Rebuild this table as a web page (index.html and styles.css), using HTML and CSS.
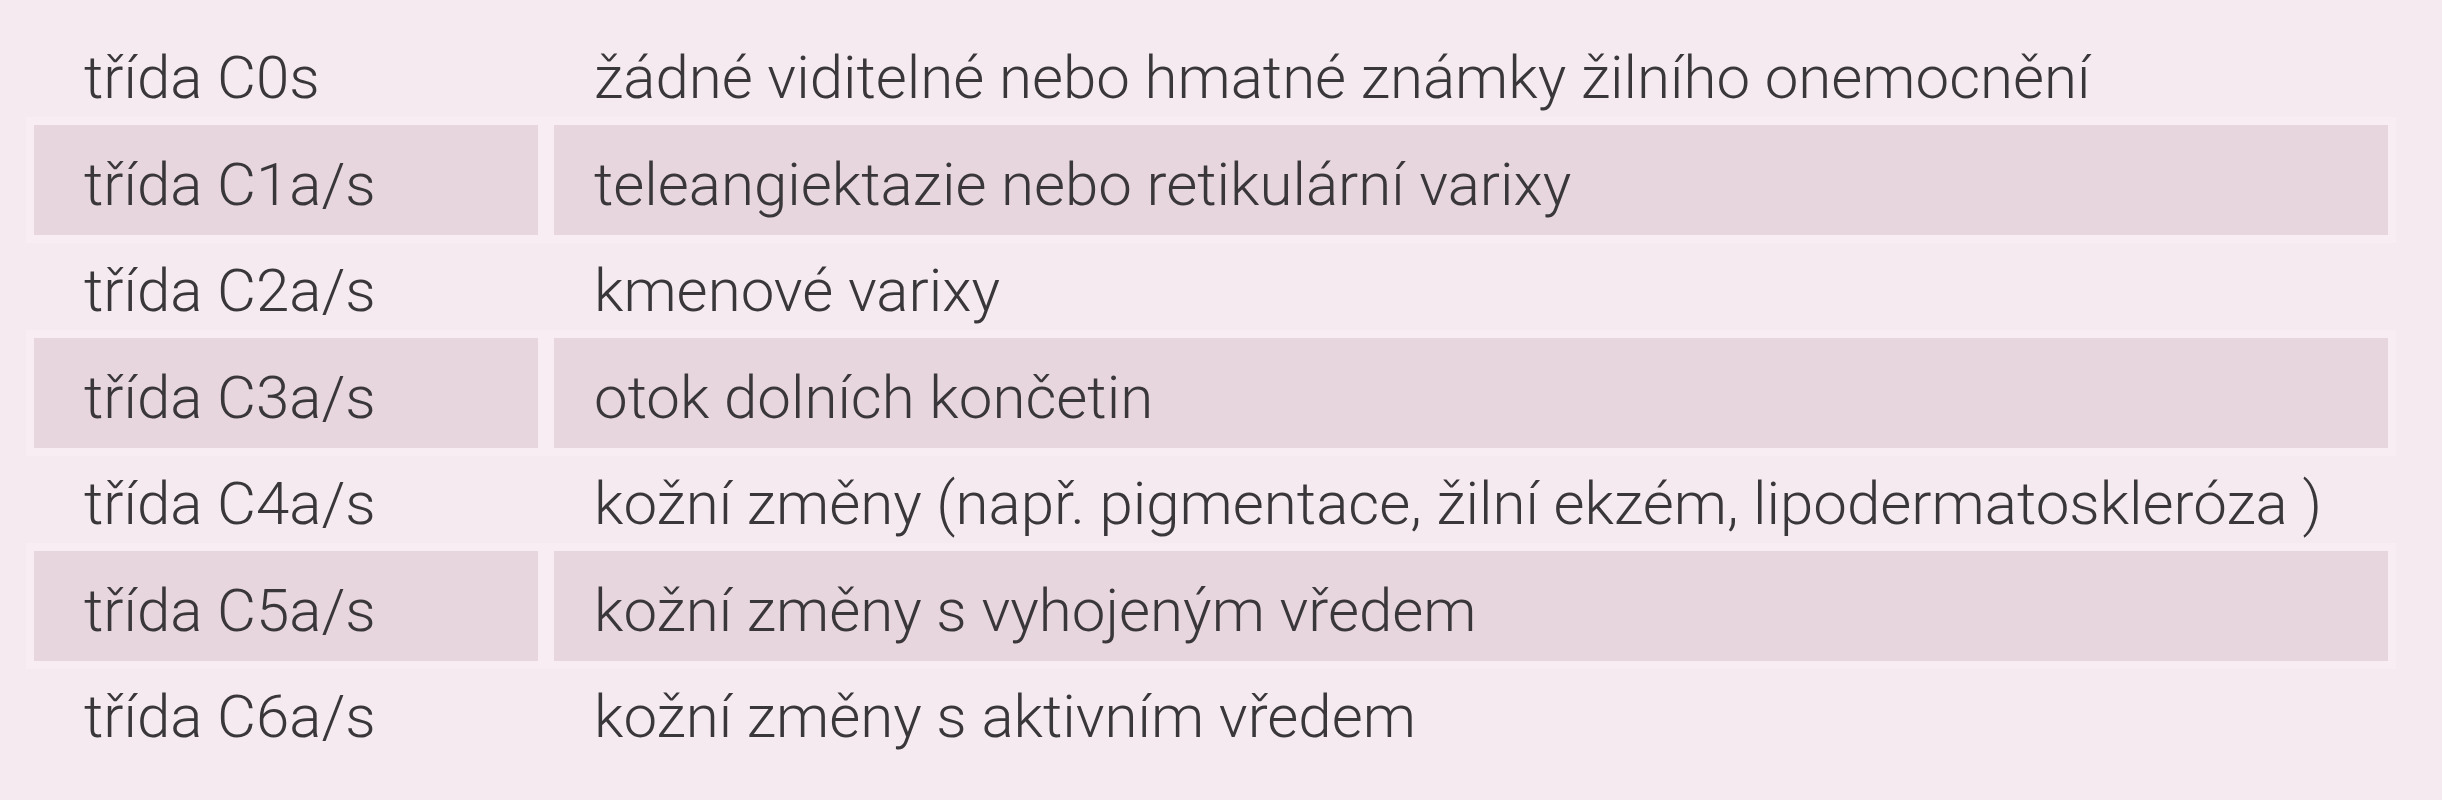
FILE: index.html
```html
<!DOCTYPE html>
<html lang="cs">
<head>
<meta charset="utf-8">
<title>CEAP klasifikace</title>
<link rel="stylesheet" href="styles.css">
</head>
<body>
<div class="table">
  <div class="row"><div class="cell c1">třída C0s</div><div class="cell c2">žádné viditelné nebo hmatné známky žilního onemocnění</div></div>
  <div class="row band"><div class="cell c1">třída C1a/s</div><div class="cell c2">teleangiektazie nebo retikulární varixy</div></div>
  <div class="row"><div class="cell c1">třída C2a/s</div><div class="cell c2">kmenové varixy</div></div>
  <div class="row band"><div class="cell c1">třída C3a/s</div><div class="cell c2">otok dolních končetin</div></div>
  <div class="row"><div class="cell c1">třída C4a/s</div><div class="cell c2">kožní změny (např. pigmentace, žilní ekzém, lipodermatoskleróza )</div></div>
  <div class="row band"><div class="cell c1">třída C5a/s</div><div class="cell c2">kožní změny s vyhojeným vředem</div></div>
  <div class="row"><div class="cell c1">třída C6a/s</div><div class="cell c2">kožní změny s aktivním vředem</div></div>
</div>
</body>
</html>
```
FILE: styles.css
```css
html, body {
  margin: 0;
  padding: 0;
}
body {
  background: #f4eaf0;
  width: 2442px;
  height: 800px;
  overflow: hidden;
  font-family: Roboto, "Liberation Sans", Arial, sans-serif;
  font-weight: 300;
  color: #3a373b;
}
.table {
  display: flex;
  flex-direction: column;
  padding: 22px 54px 0 34px;
}
.row {
  display: grid;
  grid-template-columns: 504px 1fr;
  column-gap: 16px;
  height: 103px;
}
.row.band {
  height: 110px;
}
.cell {
  display: flex;
  align-items: center;
  padding-top: 8px;
  box-sizing: border-box;
  font-size: 60px;
  white-space: nowrap;
}
.c1 {
  padding-left: 50px;
}
.c2 {
  padding-left: 40px;
}
.band .cell {
  background: #e8d6df;
  box-shadow: 0 0 0 8px #f7edf2;
}
```
